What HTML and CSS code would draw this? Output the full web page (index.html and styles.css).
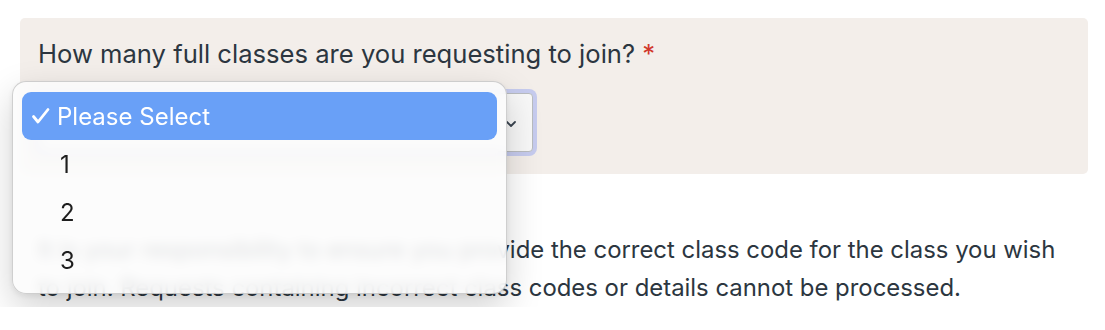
FILE: index.html
```html
<!DOCTYPE html>
<html lang="en">
<head>
  <meta charset="UTF-8" />
  <title>Class Request</title>
  <link rel="stylesheet" href="styles.css">
</head>
<body>

  <div class="form-wrap">
    <!-- Question block -->
    <div class="question-box">
      <label class="question-label" for="classCount">How many full classes are you requesting to join? <span class="required">*</span></label>

      <div class="select-field">
        <div class="select-box" id="classCount">
          <span class="select-value">Please Select</span>
          <svg class="select-arrow" width="14" height="14" viewBox="0 0 14 14"><path d="M3 5l4 4 4-4" fill="none" stroke="#3a4450" stroke-width="1.8" stroke-linecap="round" stroke-linejoin="round"/></svg>
        </div>

        <!-- open dropdown menu -->
        <ul class="select-menu">
          <li class="menu-item selected">
            <svg class="check" width="20" height="18" viewBox="0 0 20 18"><path d="M2.5 9.5l4.5 5.5L17 2.5" fill="none" stroke="#fff" stroke-width="2.8" stroke-linecap="round" stroke-linejoin="round"/></svg>
            Please Select
          </li>
          <li class="menu-item">1</li>
          <li class="menu-item">2</li>
          <li class="menu-item">3</li>
        </ul>
      </div>
    </div>

    <p class="notice">It is your responsibility to ensure you provide the correct class code for the class you wish to join. Requests containing incorrect class codes or details cannot be processed.</p>
  </div>

</body>
</html>
```

FILE: styles.css
```css
:root {
  --text-dark: #2c3640;
  --panel-bg: #f3eeea;
  --required: #d1382c;
  --menu-blue: #69a0f7;
}

* {
  box-sizing: border-box;
  margin: 0;
  padding: 0;
}

body {
  font-family: Inter, 'Noto Sans', sans-serif;
  background-color: #ffffff;
  color: var(--text-dark);
}

.form-wrap {
  padding: 18px 17px 0 20px;
}

.question-box {
  background-color: var(--panel-bg);
  border-radius: 5px;
  padding: 21px 18px 22px;
}

.question-label {
  display: block;
  font-size: 25.6px;
  line-height: 30px;
}

.required {
  color: var(--required);
}

.select-field {
  position: relative;
  width: 495px;
  margin-top: 24px;
}

.select-box {
  height: 59px;
  display: flex;
  align-items: center;
  justify-content: space-between;
  padding: 0 14px 0 18px;
  background-color: #f8f8f8;
  border: 1px solid #b9bcbf;
  border-radius: 4px;
  box-shadow: 0 0 0 4px #c6cbee;
  font-size: 24px;
}

.select-arrow {
  margin-top: 2px;
}

.select-menu {
  position: absolute;
  left: -26px;
  top: -12px;
  width: 495px;
  list-style: none;
  padding: 10px 9px 9px;
  background: rgba(252, 252, 252, 0.86);
  backdrop-filter: blur(6px);
  border: 1px solid rgba(0, 0, 0, 0.18);
  border-radius: 14px;
  box-shadow: 0 14px 36px rgba(0, 0, 0, 0.18), 0 2px 6px rgba(0, 0, 0, 0.08);
  z-index: 10;
}

.menu-item {
  height: 48px;
  display: flex;
  align-items: center;
  padding-left: 38px;
  font-size: 24px;
  color: #1e1e1e;
  border-radius: 9px;
}

.menu-item.selected {
  position: relative;
  background-color: var(--menu-blue);
  color: #ffffff;
  padding-left: 35px;
}

.check {
  position: absolute;
  left: 9px;
  top: 15px;
}

.notice {
  margin-top: 57px;
  padding-left: 18px;
  padding-right: 22px;
  font-size: 23.9px;
  line-height: 38px;
}
```
